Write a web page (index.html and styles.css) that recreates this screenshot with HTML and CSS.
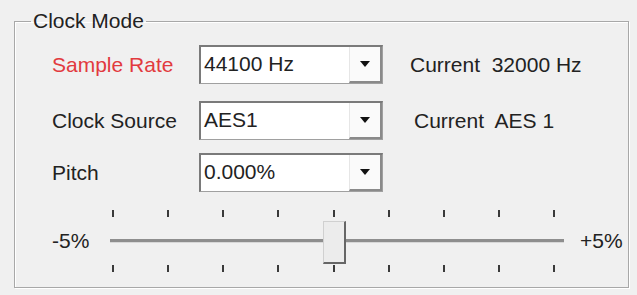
FILE: index.html
```html
<!DOCTYPE html>
<html lang="en">
<head>
<meta charset="UTF-8">
<title>Clock Mode</title>
<link rel="stylesheet" href="styles.css">
</head>
<body>
    <fieldset class="group">
        <legend>Clock Mode</legend>

        <div class="row">
            <span class="label red">Sample Rate</span>
            <div class="combo">
                <span class="combo-text">44100 Hz</span>
                <span class="combo-btn"><i class="arrow"></i></span>
            </div>
            <span class="current">Current&nbsp; 32000 Hz</span>
        </div>

        <div class="row source">
            <span class="label">Clock Source</span>
            <div class="combo">
                <span class="combo-text">AES1</span>
                <span class="combo-btn"><i class="arrow"></i></span>
            </div>
            <span class="current shift">Current&nbsp; AES 1</span>
        </div>

        <div class="row pitch">
            <span class="label">Pitch</span>
            <div class="combo">
                <span class="combo-text">0.000%</span>
                <span class="combo-btn"><i class="arrow"></i></span>
            </div>
        </div>

        <!-- pitch slider -->
        <div class="slider-row">
            <span class="end-label">-5%</span>
            <div class="slider">
                <div class="ticks">
                    <i></i><i></i><i></i><i></i><i></i><i></i><i></i><i></i><i></i>
                </div>
                <div class="track"></div>
                <div class="ticks">
                    <i></i><i></i><i></i><i></i><i></i><i></i><i></i><i></i><i></i>
                </div>
                <div class="thumb"></div>
            </div>
            <span class="end-label plus">+5%</span>
        </div>
    </fieldset>
</body>
</html>
```

FILE: styles.css
```css
*{box-sizing:border-box}
html,body{margin:0;padding:0}
body{
    background:#f0f0f0;
    font-family:"Liberation Sans",Arial,sans-serif;
    font-size:21px;
    color:#222;
    width:637px;
    height:295px;
    overflow:hidden;
}

/* group box ------------- */
.group{
    margin:9px 8px 0 14px;
    padding:12px 0 0 37px;
    height:279px;
    border:1px solid #a8a8a8;
    box-shadow:inset 1px 1px 0 #fff, 1px 1px 0 #fff;
}
.group legend{
    margin-left:-21px;
    padding:0 2px;
    line-height:24px;
}

/* rows ------------------ */
.row{
    display:flex;
    align-items:center;
    height:39px;
}
.row.source{margin-top:17px}
.row.pitch{margin-top:13px}
.label{width:147px;white-space:nowrap}
.red{color:#e23a3e}
.current{padding-left:27px;white-space:nowrap}
.current.shift{padding-left:31px}

.combo{
    display:flex;
    width:184px;
    height:39px;
    background:#fff;
    border:1px solid #a0a0a0;
    border-top:2px solid #7a7a7a;
    border-left:2px solid #7a7a7a;
}
.combo-text{
    flex:1;
    padding-left:3px;
    line-height:34px;
}
.combo-btn{
    width:33px;
    display:flex;
    align-items:center;
    justify-content:center;
    background:#fafafa;
    border-right:2px solid #8a8a8a;
    border-bottom:2px solid #8a8a8a;
    border-left:1px solid #e6e6e6;
}
.arrow{
    width:0;height:0;
    border-left:5px solid transparent;
    border-right:5px solid transparent;
    border-top:6px solid #111;
}

/* slider ---------------- */
.slider-row{
    display:flex;
    align-items:center;
    padding-top:18px;
}
.end-label{width:58px;white-space:nowrap}
.end-label.plus{width:auto;padding-left:16px}
.slider{
    position:relative;
    width:454px;
    height:62px;
    display:flex;
    flex-direction:column;
    justify-content:space-between;
}
.ticks{
    display:flex;
    justify-content:space-between;
    padding:0 9px 0 2px;
}
.ticks i{
    display:block;
    width:2px;
    height:7px;
    background:#3a3a3a;
}
.track{
    height:4px;
    background:#8e8e8e;
    border-bottom:1px solid #d8d8d8;
}
.thumb{
    position:absolute;
    left:213px;
    top:11px;
    width:23px;
    height:43px;
    background:#ececec;
    border-top:1px solid #d0d0d0;
    border-left:1px solid #d0d0d0;
    border-right:2px solid #666;
    border-bottom:2px solid #666;
}
```
